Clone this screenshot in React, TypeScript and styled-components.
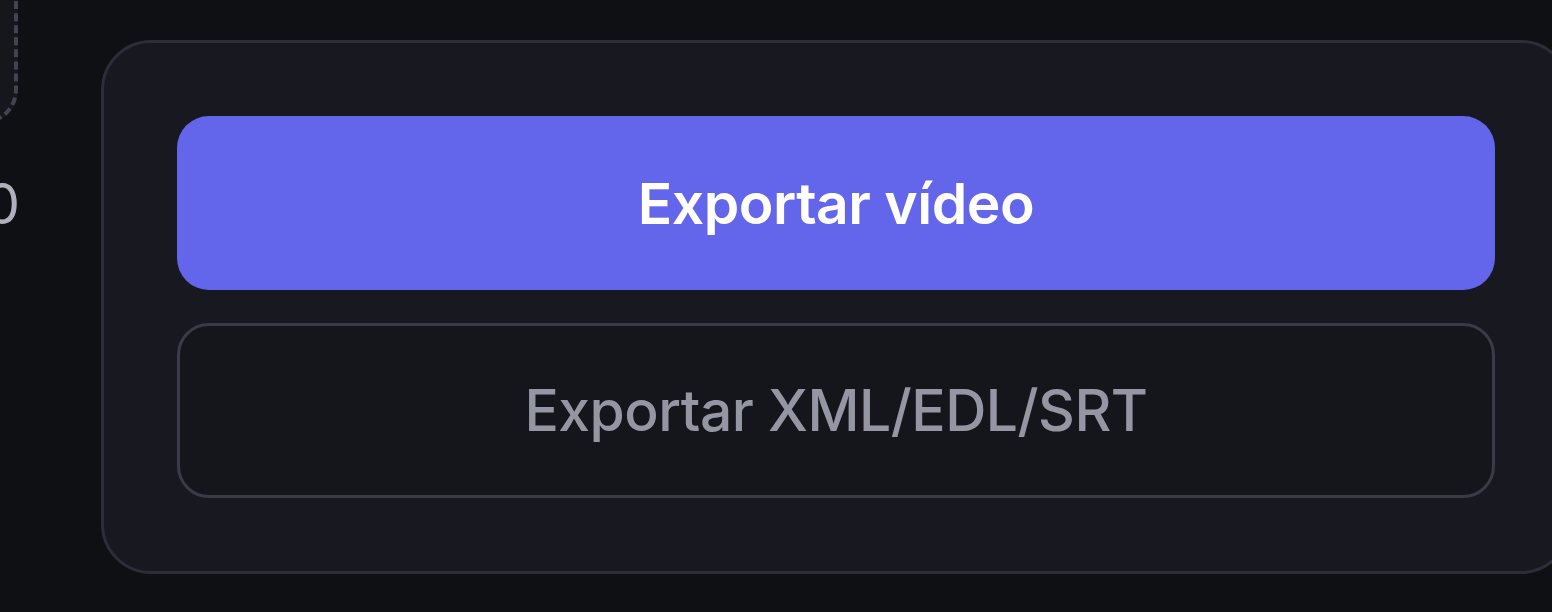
import React from "react";
import styled, { createGlobalStyle } from "styled-components";

const Global = createGlobalStyle`
  html, body {
    margin: 0;
    padding: 0;
    background: #0f1014;
    overflow: hidden;
  }
  body {
    font-family: "Inter", "Noto Sans", sans-serif;
    -webkit-font-smoothing: antialiased;
  }
`;

const Page = styled.div`
  display: flex;
  align-items: flex-start;
  gap: 83px;
  width: 1552px;
  height: 612px;
  padding-top: 40px;
  box-sizing: border-box;
`;

const SideColumn = styled.div`
  flex: none;
  width: 200px;
  margin-left: -182px;
  margin-top: -120px;
  display: flex;
  flex-direction: column;
  align-items: stretch;
`;

const DropZone = styled.div`
  height: 204px;
  border: 4px dashed #434450;
  border-radius: 34px;
  background: #16171d;
  box-sizing: border-box;
`;

const SideValue = styled.div`
  margin-top: 52px;
  text-align: right;
  margin-right: -2px;
  font-size: 56px;
  line-height: 1;
  font-weight: 400;
  color: #aeb0bd;
`;

const Panel = styled.div`
  flex: none;
  width: 1470px;
  height: 534px;
  box-sizing: border-box;
  padding: 73px 73px;
  border: 3px solid #2b2d38;
  border-radius: 50px;
  background: #181920;
  display: flex;
  flex-direction: column;
  gap: 33px;
`;

const Button = styled.button<{ $primary?: boolean }>`
  height: 175px;
  width: 100%;
  box-sizing: border-box;
  border-radius: 32px;
  font-family: "Inter", "Noto Sans", sans-serif;
  font-size: 57px;
  letter-spacing: -0.5px;
  cursor: pointer;
  display: flex;
  align-items: center;
  justify-content: center;
  padding: 0;
  background: ${(p) => (p.$primary ? "#6366ea" : "#15161c")};
  color: ${(p) => (p.$primary ? "#ffffff" : "#9496a3")};
  border: ${(p) => (p.$primary ? "none" : "3px solid #393b47")};
  font-weight: ${(p) => (p.$primary ? 600 : 500)};
`;

export default function App() {
  return (
    <>
      <Global />
      <Page>
        <SideColumn>
          <DropZone />
          <SideValue>0</SideValue>
        </SideColumn>
        <Panel>
          <Button $primary>Exportar vídeo</Button>
          <Button>Exportar XML/EDL/SRT</Button>
        </Panel>
      </Page>
    </>
  );
}
